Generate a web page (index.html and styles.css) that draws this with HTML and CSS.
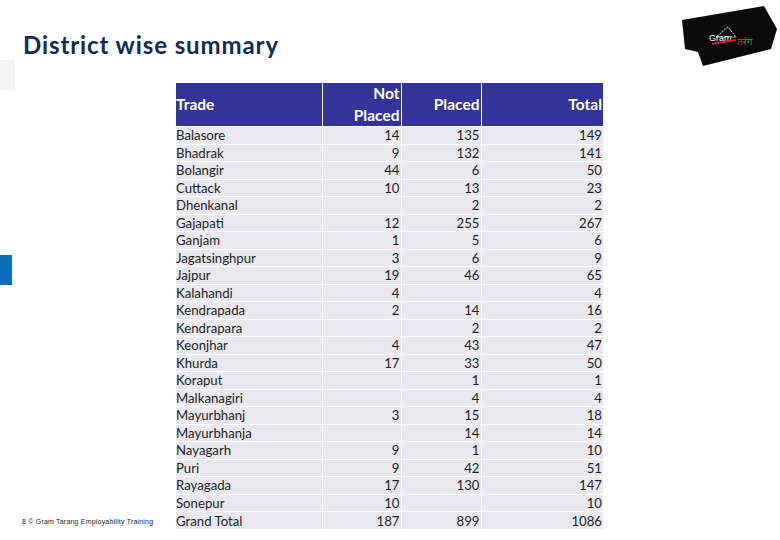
FILE: index.html
```html
<!DOCTYPE html>
<html lang="en">
<head>
<meta charset="utf-8">
<title>District wise summary</title>
<link rel="stylesheet" href="styles.css">
</head>
<body>
<div class="slide">
  <header class="top">
    <h1 class="title">District wise summary</h1>
    <svg class="logo" width="104" height="68" viewBox="0 0 104 68" aria-label="Gram Tarang logo">
      <polygon points="6,16 88,2 101,25 95,45 27,62 22,48 9,45" fill="#0b0b0b"/>
      <polygon points="52,23 40,33 60,33" fill="none" stroke="#e8e8e8" stroke-width="1" stroke-dasharray="2 1"/>
      <text x="33" y="37" class="logo-gram">Gram</text>
      <path d="M36 40 L60 36" stroke="#c0262c" stroke-width="2"/>
      <text x="61" y="41" class="logo-hindi">त<tspan fill="#3a9a3a">रंग</tspan></text>
    </svg>
  </header>
  <main class="main">
    <div class="rail">
      <div class="mark mark-gray"></div>
      <div class="mark mark-blue"></div>
    </div>
    <aside class="side">
      <p class="footer">8 © Gram Tarang Employability Training</p>
    </aside>
    <table class="summary">
      <colgroup>
        <col class="c-trade"><col class="c-not"><col class="c-placed"><col class="c-total">
      </colgroup>
      <thead>
        <tr>
          <th class="left">Trade</th>
          <th>Not<br>Placed</th>
          <th>Placed</th>
          <th>Total</th>
        </tr>
      </thead>
      <tbody>
        <tr><td class="left">Balasore</td><td>14</td><td>135</td><td>149</td></tr>
        <tr><td class="left">Bhadrak</td><td>9</td><td>132</td><td>141</td></tr>
        <tr><td class="left">Bolangir</td><td>44</td><td>6</td><td>50</td></tr>
        <tr><td class="left">Cuttack</td><td>10</td><td>13</td><td>23</td></tr>
        <tr><td class="left">Dhenkanal</td><td></td><td>2</td><td>2</td></tr>
        <tr><td class="left">Gajapati</td><td>12</td><td>255</td><td>267</td></tr>
        <tr><td class="left">Ganjam</td><td>1</td><td>5</td><td>6</td></tr>
        <tr><td class="left">Jagatsinghpur</td><td>3</td><td>6</td><td>9</td></tr>
        <tr><td class="left">Jajpur</td><td>19</td><td>46</td><td>65</td></tr>
        <tr><td class="left">Kalahandi</td><td>4</td><td></td><td>4</td></tr>
        <tr><td class="left">Kendrapada</td><td>2</td><td>14</td><td>16</td></tr>
        <tr><td class="left">Kendrapara</td><td></td><td>2</td><td>2</td></tr>
        <tr><td class="left">Keonjhar</td><td>4</td><td>43</td><td>47</td></tr>
        <tr><td class="left">Khurda</td><td>17</td><td>33</td><td>50</td></tr>
        <tr><td class="left">Koraput</td><td></td><td>1</td><td>1</td></tr>
        <tr><td class="left">Malkanagiri</td><td></td><td>4</td><td>4</td></tr>
        <tr><td class="left">Mayurbhanj</td><td>3</td><td>15</td><td>18</td></tr>
        <tr><td class="left">Mayurbhanja</td><td></td><td>14</td><td>14</td></tr>
        <tr><td class="left">Nayagarh</td><td>9</td><td>1</td><td>10</td></tr>
        <tr><td class="left">Puri</td><td>9</td><td>42</td><td>51</td></tr>
        <tr><td class="left">Rayagada</td><td>17</td><td>130</td><td>147</td></tr>
        <tr><td class="left">Sonepur</td><td>10</td><td></td><td>10</td></tr>
        <tr><td class="left">Grand Total</td><td>187</td><td>899</td><td>1086</td></tr>
      </tbody>
    </table>
  </main>
</div>
</body>
</html>
```
FILE: styles.css
```css
* { box-sizing: border-box; }
html, body { margin: 0; padding: 0; background: #ffffff; }
body { font-family: Lato, "Open Sans", "Liberation Sans", sans-serif; }

.slide {
  width: 780px;
  height: 540px;
  overflow: hidden;
  display: flex;
  flex-direction: column;
  background: #ffffff;
}

.top {
  height: 60px;
  display: flex;
  justify-content: space-between;
  align-items: flex-start;
}
.title {
  margin: 0;
  padding: 31px 0 0 23px;
  font-size: 24px;
  line-height: 28px;
  font-weight: 700;
  color: #112a5c;
  letter-spacing: 0.9px;
}
.logo { margin: 4px 0 0 0; display: block; }
.logo-gram { font-family: "Liberation Sans", sans-serif; font-size: 9px; fill: #ffffff; }
.logo-hindi { font-family: "Noto Sans", "DejaVu Sans", sans-serif; font-size: 10px; fill: #d1343a; }

.main {
  flex: 1;
  display: flex;
  align-items: flex-start;
}
.rail {
  width: 14px;
  display: flex;
  flex-direction: column;
}
.mark-gray { width: 15px; height: 30px; background: #f3f3f3; }
.mark-blue { width: 12px; height: 30px; margin-top: 165px; background: #0b6cbb; }

.side {
  width: 162px;
  height: 480px;
  display: flex;
  flex-direction: column;
  justify-content: flex-end;
}
.footer {
  margin: 0 0 15px 8px;
  font-family: "Liberation Sans", sans-serif;
  font-size: 7px;
  color: #222;
  letter-spacing: 0.2px;
}

.summary {
  margin-top: 23px;
  table-layout: fixed;
  width: 427px;
  border-collapse: collapse;
  color: #1e1e1e;
}
.c-trade { width: 146px; }
.c-not { width: 79px; }
.c-placed { width: 80px; }
.c-total { width: 122px; }

.summary th {
  background: #333399;
  color: #ffffff;
  font-weight: 700;
  font-size: 15.5px;
  line-height: 21.5px;
  height: 43px;
  padding: 0 1px 0 0;
  text-align: right;
  border-left: 1px solid #ffffff;
  vertical-align: middle;
}
.summary th.left { text-align: left; border-left: none; padding-left: 0; }

.summary td {
  background: #e8e8ee;
  font-size: 13.2px;
  height: 17.5px;
  line-height: 16px;
  padding: 0 1px 0 0;
  text-align: right;
  border-top: 1px solid #ffffff;
  border-left: 1px solid #ffffff;
  white-space: nowrap;
}
.summary td.left { text-align: left; border-left: none; padding-left: 0; }
```
